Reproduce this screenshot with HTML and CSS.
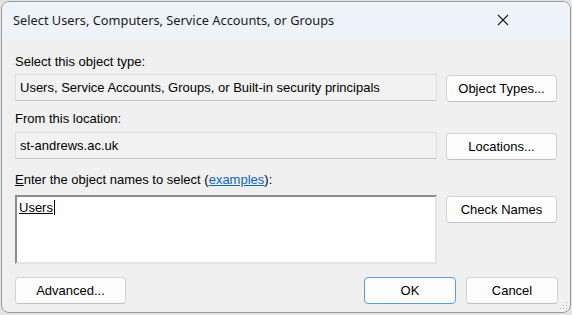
FILE: index.html
```html
<!DOCTYPE html>
<html lang="en">
<head>
    <meta charset="UTF-8">
    <meta name="viewport" content="width=device-width, initial-scale=1.0">
    <title>Select Users, Computers, Service Accounts, or Groups</title>
    <link rel="stylesheet" href="styles.css">
</head>
<body>
    <div class="window">
        <div class="titlebar">
            <span class="title">Select Users, Computers, Service Accounts, or Groups</span>
            <button class="close" aria-label="Close">
                <svg width="12" height="12" viewBox="0 0 12 12">
                    <path d="M1 1 L11 11 M11 1 L1 11" stroke="#1b1b1b" stroke-width="1.1" fill="none"/>
                </svg>
            </button>
        </div>

        <div class="content">
            <div class="form">
                <div class="lbl first">Select this object type:</div>
                <div class="field">Users, Service Accounts, Groups, or Built-in security principals</div>
                <button class="btn side">Object Types...</button>

                <div class="lbl">From this location:</div>
                <div class="field">st-andrews.ac.uk</div>
                <button class="btn side">Locations...</button>

                <div class="lbl third"><u>E</u>nter the object names to select (<a href="#" class="link">examples</a>):</div>
                <div class="names"><span class="resolved">Users</span><span class="caret"></span></div>
                <button class="btn side">Check Names</button>
            </div>

            <div class="footer">
                <button class="btn">Advanced...</button>
                <div class="actions">
                    <button class="btn small default">OK</button>
                    <button class="btn small">Cancel</button>
                </div>
            </div>
        </div>

        <svg class="grip" width="8" height="8" viewBox="0 0 8 8">
            <rect x="6" y="0" width="1" height="1" fill="#b0b0b0"/>
            <rect x="3" y="3" width="1" height="1" fill="#b0b0b0"/>
            <rect x="6" y="3" width="1" height="1" fill="#b0b0b0"/>
            <rect x="0" y="6" width="1" height="1" fill="#b0b0b0"/>
            <rect x="3" y="6" width="1" height="1" fill="#b0b0b0"/>
            <rect x="6" y="6" width="1" height="1" fill="#b0b0b0"/>
        </svg>
    </div>
</body>
</html>
```

FILE: styles.css
```css
body {
    margin: 0;
    padding: 1px 1px 0 1px;
    background-color: #e4e4e4;
    font-family: "Liberation Sans", Arial, sans-serif;
    font-size: 13px;
    color: #000;
}
.window {
    position: relative;
    width: 568px;
    height: 310px;
    border: 1px solid #9a9a9a;
    border-radius: 8px;
    overflow: hidden;
    background-color: #f0f0f0;
}
.titlebar {
    height: 37px;
    background-color: #eef3fa;
    display: flex;
    align-items: center;
    justify-content: space-between;
    padding-left: 11px;
}
.title {
    font-family: "Noto Sans", sans-serif;
    font-size: 12.8px;
    color: #1a1a1a;
    padding-bottom: 2px;
}
.close {
    width: 46px;
    height: 37px;
    margin-right: 44px;
    border: none;
    background: transparent;
    display: flex;
    align-items: center;
    justify-content: center;
    padding: 0 0 1px 0;
}
.content {
    padding: 0 11px 0 13px;
}
.form {
    display: grid;
    grid-template-columns: 422px 111px;
    column-gap: 9px;
}
.lbl {
    grid-column: 1 / 3;
    line-height: 16px;
    margin-top: 9px;
    margin-bottom: 5px;
}
.lbl.first {
    margin-top: 15px;
    margin-bottom: 4px;
}
.lbl.third {
    margin-top: 12px;
    margin-bottom: 7px;
}
.link {
    color: #0a66c2;
    text-decoration: underline;
}
.field {
    height: 25px;
    line-height: 25px;
    padding-left: 4px;
    background-color: #f2f2f2;
    border: 1px solid #dddddd;
    border-bottom-color: #c6c6c6;
    white-space: nowrap;
    overflow: hidden;
}
.names {
    height: 59px;
    background-color: #fff;
    border-top: 2px solid #8c8c8c;
    border-left: 2px solid #8c8c8c;
    border-right: 2px solid #e3e3e3;
    border-bottom: 2px solid #e3e3e3;
    padding: 3px 2px;
    display: flex;
    align-items: flex-start;
}
.resolved {
    text-decoration: underline;
    line-height: 16px;
}
.caret {
    width: 1px;
    height: 15px;
    background-color: #000;
    margin-left: 1px;
}
.btn {
    font-family: "Liberation Sans", Arial, sans-serif;
    font-size: 13px;
    color: #000;
    height: 27px;
    width: 111px;
    background-color: #fdfdfd;
    border: 1px solid #d3d3d3;
    border-bottom-color: #c2c2c2;
    border-radius: 4px;
    padding: 0;
}
.btn.side {
    margin-top: 1px;
    align-self: start;
}
.btn.small {
    width: 92px;
}
.btn.default {
    border-color: #5b9be0;
}
.footer {
    display: flex;
    justify-content: space-between;
    margin-top: 13px;
    padding-right: 1px;
}
.actions {
    display: flex;
    gap: 10px;
}
.grip {
    position: absolute;
    right: 2px;
    bottom: 2px;
}
```
